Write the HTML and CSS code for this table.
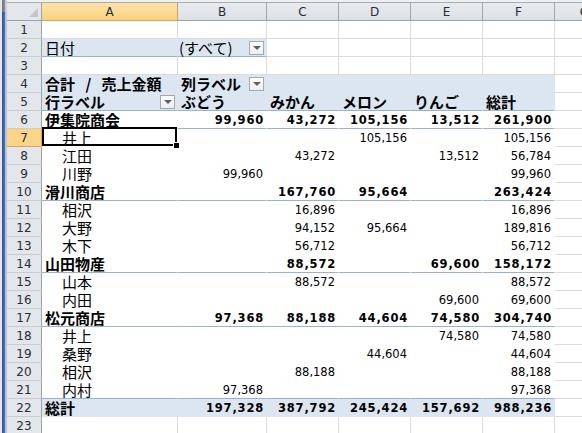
FILE: index.html
```html
<!DOCTYPE html>
<html lang="ja">
<head>
<meta charset="utf-8">
<link rel="stylesheet" href="styles.css">
</head>
<body>
<div class="app">
  <div class="frame"></div>
  <div class="sheet">
    <div class="topstrip"></div>
    <div class="row hdr">
      <div class="corner"></div>
      <div class="ch sel">A</div>
      <div class="ch">B</div>
      <div class="ch">C</div>
      <div class="ch">D</div>
      <div class="ch">E</div>
      <div class="ch">F</div>
      <div class="ch">G</div>
    </div>

    <div class="row"><div class="rh">1</div><div class="c"></div><div class="c"></div><div class="c"></div><div class="c"></div><div class="c"></div><div class="c"></div><div class="c"></div></div>

    <div class="row"><div class="rh">2</div>
      <div class="c pb bl t">日付</div>
      <div class="c pb bl t fld"><span class="all">(すべて)</span><span class="dd"></span></div>
      <div class="c"></div><div class="c"></div><div class="c"></div><div class="c"></div><div class="c"></div></div>

    <div class="row"><div class="rh">3</div><div class="c"></div><div class="c"></div><div class="c"></div><div class="c"></div><div class="c"></div><div class="c"></div><div class="c"></div></div>

    <div class="row"><div class="rh">4</div>
      <div class="p pb t b ws">合計 / 売上金額</div>
      <div class="p pb t b fld"><span>列ラベル</span><span class="dd"></span></div>
      <div class="p pb"></div><div class="p pb"></div><div class="p pb"></div><div class="p pb"></div>
      <div class="c"></div></div>

    <div class="row"><div class="rh">5</div>
      <div class="p pb bl t b fld"><span>行ラベル</span><span class="dd"></span></div>
      <div class="p pb bl t b">ぶどう</div>
      <div class="p pb bl t b">みかん</div>
      <div class="p pb bl t b">メロン</div>
      <div class="p pb bl t b">りんご</div>
      <div class="p pb bl t b">総計</div>
      <div class="c"></div></div>

    <div class="row"><div class="rh">6</div>
      <div class="p bl t b">伊集院商会</div>
      <div class="p bl n b">99,960</div>
      <div class="p bl n b">43,272</div>
      <div class="p bl n b">105,156</div>
      <div class="p bl n b">13,512</div>
      <div class="p bl n b">261,900</div>
      <div class="c"></div></div>

    <div class="row"><div class="rh on">7</div>
      <div class="p t i cur">井上<span class="handle"></span></div>
      <div class="p n"></div><div class="p n"></div>
      <div class="p n">105,156</div>
      <div class="p n"></div>
      <div class="p n">105,156</div>
      <div class="c"></div></div>

    <div class="row"><div class="rh">8</div>
      <div class="p t i">江田</div>
      <div class="p n"></div>
      <div class="p n">43,272</div>
      <div class="p n"></div>
      <div class="p n">13,512</div>
      <div class="p n">56,784</div>
      <div class="c"></div></div>

    <div class="row"><div class="rh">9</div>
      <div class="p t i">川野</div>
      <div class="p n">99,960</div>
      <div class="p n"></div><div class="p n"></div><div class="p n"></div>
      <div class="p n">99,960</div>
      <div class="c"></div></div>

    <div class="row"><div class="rh">10</div>
      <div class="p bl t b">滑川商店</div>
      <div class="p bl n b"></div>
      <div class="p bl n b">167,760</div>
      <div class="p bl n b">95,664</div>
      <div class="p bl n b"></div>
      <div class="p bl n b">263,424</div>
      <div class="c"></div></div>

    <div class="row"><div class="rh">11</div>
      <div class="p t i">相沢</div>
      <div class="p n"></div>
      <div class="p n">16,896</div>
      <div class="p n"></div><div class="p n"></div>
      <div class="p n">16,896</div>
      <div class="c"></div></div>

    <div class="row"><div class="rh">12</div>
      <div class="p t i">大野</div>
      <div class="p n"></div>
      <div class="p n">94,152</div>
      <div class="p n">95,664</div>
      <div class="p n"></div>
      <div class="p n">189,816</div>
      <div class="c"></div></div>

    <div class="row"><div class="rh">13</div>
      <div class="p t i">木下</div>
      <div class="p n"></div>
      <div class="p n">56,712</div>
      <div class="p n"></div><div class="p n"></div>
      <div class="p n">56,712</div>
      <div class="c"></div></div>

    <div class="row"><div class="rh">14</div>
      <div class="p bl t b">山田物産</div>
      <div class="p bl n b"></div>
      <div class="p bl n b">88,572</div>
      <div class="p bl n b"></div>
      <div class="p bl n b">69,600</div>
      <div class="p bl n b">158,172</div>
      <div class="c"></div></div>

    <div class="row"><div class="rh">15</div>
      <div class="p t i">山本</div>
      <div class="p n"></div>
      <div class="p n">88,572</div>
      <div class="p n"></div><div class="p n"></div>
      <div class="p n">88,572</div>
      <div class="c"></div></div>

    <div class="row"><div class="rh">16</div>
      <div class="p t i">内田</div>
      <div class="p n"></div><div class="p n"></div><div class="p n"></div>
      <div class="p n">69,600</div>
      <div class="p n">69,600</div>
      <div class="c"></div></div>

    <div class="row"><div class="rh">17</div>
      <div class="p bl t b">松元商店</div>
      <div class="p bl n b">97,368</div>
      <div class="p bl n b">88,188</div>
      <div class="p bl n b">44,604</div>
      <div class="p bl n b">74,580</div>
      <div class="p bl n b">304,740</div>
      <div class="c"></div></div>

    <div class="row"><div class="rh">18</div>
      <div class="p t i">井上</div>
      <div class="p n"></div><div class="p n"></div><div class="p n"></div>
      <div class="p n">74,580</div>
      <div class="p n">74,580</div>
      <div class="c"></div></div>

    <div class="row"><div class="rh">19</div>
      <div class="p t i">桑野</div>
      <div class="p n"></div><div class="p n"></div>
      <div class="p n">44,604</div>
      <div class="p n"></div>
      <div class="p n">44,604</div>
      <div class="c"></div></div>

    <div class="row"><div class="rh">20</div>
      <div class="p t i">相沢</div>
      <div class="p n"></div>
      <div class="p n">88,188</div>
      <div class="p n"></div><div class="p n"></div>
      <div class="p n">88,188</div>
      <div class="c"></div></div>

    <div class="row"><div class="rh">21</div>
      <div class="p bl t i">内村</div>
      <div class="p bl n">97,368</div>
      <div class="p bl n"></div><div class="p bl n"></div><div class="p bl n"></div>
      <div class="p bl n">97,368</div>
      <div class="c"></div></div>

    <div class="row"><div class="rh">22</div>
      <div class="p pb t b">総計</div>
      <div class="p pb n b">197,328</div>
      <div class="p pb n b">387,792</div>
      <div class="p pb n b">245,424</div>
      <div class="p pb n b">157,692</div>
      <div class="p pb n b">988,236</div>
      <div class="c"></div></div>

    <div class="row"><div class="rh">23</div><div class="c"></div><div class="c"></div><div class="c"></div><div class="c"></div><div class="c"></div><div class="c"></div><div class="c"></div></div>
  </div>
</div>
</body>
</html>
```

FILE: styles.css
```css
html, body {
  margin: 0;
  padding: 0;
  background: #ffffff;
}
body {
  width: 582px;
  height: 433px;
  overflow: hidden;
  font-family: "Noto Sans CJK JP", "DejaVu Sans", sans-serif;
  color: #000;
}
.app {
  display: flex;
  height: 433px;
  overflow: hidden;
}
.frame {
  width: 7px;
  flex: 0 0 7px;
  background:
    linear-gradient(to right, #e4e7ec 0, #e4e7ec 2px, #2f5597 2px, #4a72b5 5px, #b7c5da 5px, #b7c5da 7px) 0 12px / 7px 100% no-repeat,
    linear-gradient(to right, #e4e7ec 0, #e4e7ec 2px, #6f747b 2px, #8b9097 5px, #c9ccd1 5px, #c9ccd1 7px);
}
.sheet {
  flex: 1;
  min-width: 0;
}
.topstrip {
  height: 3px;
  box-sizing: border-box;
  background: #eef0f2;
  border-bottom: 1px solid #a9adb3;
}
.row {
  display: grid;
  grid-template-columns: 35px 136px 89px 72px 72px 72px 72px 60px;
  height: 18px;
}
.row > div {
  box-sizing: border-box;
  height: 18px;
  white-space: nowrap;
  overflow: visible;
}
/* headers */
.corner {
  background: #e3e6ea;
  border-right: 1px solid #9ea3a9;
  border-bottom: 1px solid #9ea3a9;
  position: relative;
}
.corner::after {
  content: "";
  position: absolute;
  right: 3px;
  bottom: 3px;
  border-left: 9px solid transparent;
  border-bottom: 9px solid #c3c7cc;
}
.ch {
  background: linear-gradient(#e7eaee, #dde1e6);
  border-right: 1px solid #a3a8ae;
  border-bottom: 1px solid #9ea3a9;
  text-align: center;
  font-family: "DejaVu Sans", sans-serif;
  font-size: 12px;
  line-height: 15px;
  padding-top: 2px;
  color: #2a2d33;
}
.ch.sel {
  background: linear-gradient(#fbe3ad, #f8d27f);
  border-bottom: 1px solid #f1a13c;
  border-right: 1px solid #c8a060;
}
.rh {
  background: #e3e6ea;
  border-right: 1px solid #9ea3a9;
  border-bottom: 1px solid #c9cdd2;
  text-align: center;
  font-family: "DejaVu Sans", sans-serif;
  font-size: 12px;
  line-height: 16px;
  padding-top: 1px;
  color: #2a2d33;
}
.rh.on {
  background: #f9d58a;
  border-bottom: 1px solid #f1a13c;
  border-right: 1px solid #f1a13c;
}
/* cells */
.c {
  border-right: 1px solid #d9dbdd;
  border-bottom: 1px solid #d9dbdd;
  background: #fff;
}
.p {
  border-right: 1px solid transparent;
  border-bottom: 1px solid transparent;
  background: #fff;
}
.pb {
  background: #dce6f1;
}
.bl {
  border-bottom-color: #95b3d7;
}
.c.bl {
  border-right-color: #dce6f1;
}
.t {
  font-size: 15px;
  line-height: 17px;
  padding-left: 3px;
}
.ws {
  word-spacing: 7px;
}
.i {
  padding-left: 20px;
}
.b {
  font-weight: bold;
}
.n {
  text-align: right;
  font-family: "DejaVu Sans", sans-serif;
  font-size: 11.5px;
  line-height: 15px;
  padding-top: 2px;
  padding-right: 3px;
}
.n.b {
  letter-spacing: 0.8px;
  padding-right: 2px;
}
.fld {
  display: flex;
  justify-content: space-between;
  align-items: flex-start;
  padding-right: 2px;
}
.all {
  margin-left: -2px;
}
.dd {
  width: 15px;
  height: 14px;
  margin-top: 2px;
  box-sizing: border-box;
  border: 1px solid #a5a8ad;
  background: linear-gradient(#ffffff, #eceef1);
  display: flex;
  align-items: center;
  justify-content: center;
}
.dd::after {
  content: "";
  border-left: 4px solid transparent;
  border-right: 4px solid transparent;
  border-top: 4px solid #5b5f66;
}
/* active cell */
.cur {
  position: relative;
}
.cur::after {
  content: "";
  position: absolute;
  left: 0;
  top: -2px;
  right: 0;
  bottom: 0;
  border: 2px solid #000;
  pointer-events: none;
}
.handle {
  position: absolute;
  right: -3px;
  bottom: -3px;
  width: 5px;
  height: 5px;
  background: #000;
  border: 1px solid #fff;
  z-index: 2;
}
```
